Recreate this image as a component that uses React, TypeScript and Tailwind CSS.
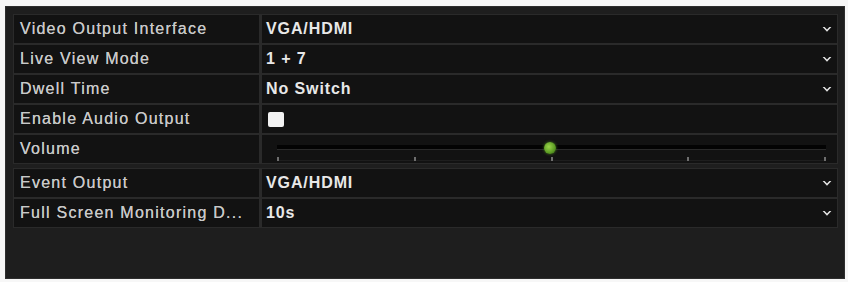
import React from 'react'

const font = { fontFamily: '"Liberation Sans", Arial, sans-serif' }

function Chevron() {
  return (
    <svg width="10" height="7" viewBox="0 0 10 7" className="shrink-0">
      <path d="M0.6 1 L5 5.8 L9.4 1 L7.4 1 L5 3.6 L2.6 1 Z" fill="#e4e4e4" />
    </svg>
  )
}

function Label({ text }: { text: string }) {
  return (
    <div className="w-[245px] shrink-0 bg-[#121212] pl-[6px] flex items-center text-[16px] tracking-[1.25px] text-[#c8c8c8] [text-shadow:0_0_0.6px_#c8c8c8] whitespace-nowrap overflow-hidden">
      {text}
    </div>
  )
}

function SelectRow({ label, value }: { label: string; value: string }) {
  return (
    <div className="flex h-[28px] gap-[3px]">
      <Label text={label} />
      <div className="flex-1 bg-[#121212] pl-[4px] pr-[5px] flex items-center justify-between">
        <span className="text-[16px] font-bold tracking-[0.9px] text-[#e8e8e8]">{value}</span>
        <Chevron />
      </div>
    </div>
  )
}

function CheckRow({ label }: { label: string }) {
  return (
    <div className="flex h-[28px] gap-[3px]">
      <Label text={label} />
      <div className="flex-1 bg-[#121212] pl-[6px] flex items-center">
        <div className="w-[16px] h-[15px] rounded-[2px] bg-[#f2f2f2]" />
      </div>
    </div>
  )
}

function VolumeRow() {
  const ticks = [0, 1, 2, 3, 4]
  return (
    <div className="flex h-[28px] gap-[3px]">
      <Label text="Volume" />
      <div className="flex-1 bg-[#121212] pl-[15px] pr-[11px] pt-[10px]">
        <div className="relative">
          <div className="h-[5px] bg-[#030303] border-b border-[#2a2a2a]" />
          <div className="mt-[7px] h-[4px] flex justify-between border-b border-[#1e1e1e]">
            {ticks.map(t => (
              <div key={t} className="w-[2px] h-[4px] bg-[#6e6e6e]" />
            ))}
          </div>
          <div className="absolute left-[267px] top-[-3px] w-[12px] h-[12px] rounded-full bg-[radial-gradient(circle_at_40%_40%,#9ad44a,#5a9a22_60%,#2f5a12)] shadow-[0_0_3px_#4a7a20]" />
        </div>
      </div>
    </div>
  )
}

export default function App() {
  return (
    <div className="w-[848px] h-[282px] bg-[#f7f7f7] pt-[6px] pl-[5px]" style={font}>
      <div className="w-[840px] h-[273px] bg-[#1e1e1e] border border-[#2e2e2e] pt-[7px] pl-[7px]">
        <div className="w-[825px] bg-[#2a2a2a] p-px flex flex-col gap-[2px]">
          <SelectRow label="Video Output Interface" value="VGA/HDMI" />
          <SelectRow label="Live View Mode" value="1 + 7" />
          <SelectRow label="Dwell Time" value="No Switch" />
          <CheckRow label="Enable Audio Output" />
          <VolumeRow />
        </div>
        <div className="mt-[4px] w-[825px] bg-[#2a2a2a] p-px flex flex-col gap-[2px]">
          <SelectRow label="Event Output" value="VGA/HDMI" />
          <SelectRow label="Full Screen Monitoring D..." value="10s" />
        </div>
      </div>
    </div>
  )
}
